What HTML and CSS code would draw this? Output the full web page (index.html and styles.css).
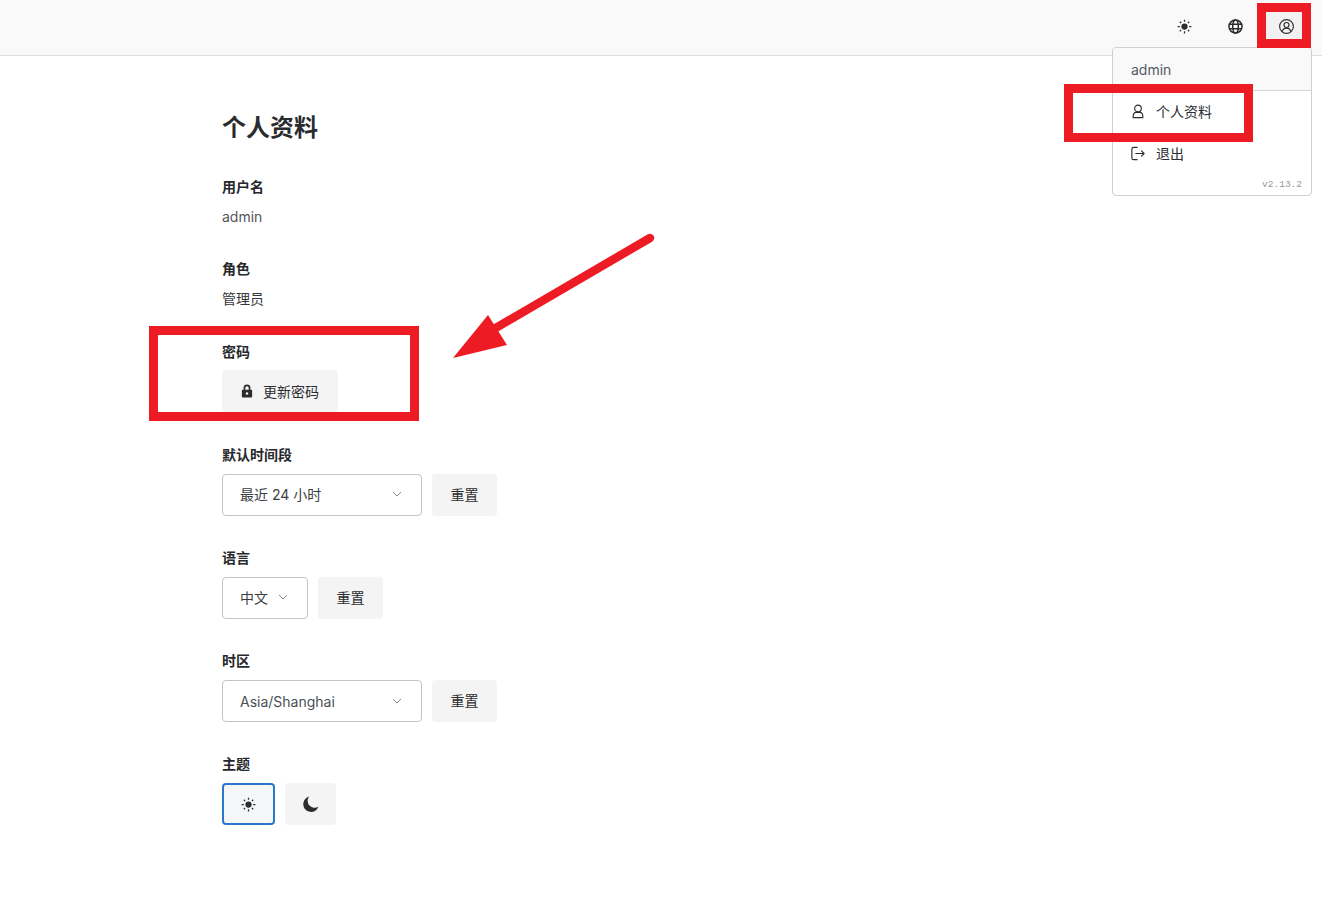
FILE: index.html
```html
<!DOCTYPE html>
<html lang="zh">
<head>
<meta charset="utf-8">
<title>个人资料</title>
<link rel="stylesheet" href="styles.css">
</head>
<body>
<header class="topbar">
  <button class="top-btn"><svg class="ico" viewBox="0 0 24 24"><circle class="solid" cx="12" cy="12" r="5"/><path class="line" d="M12 1v3.500M12 19.500V23M1 12h3.500M19.500 12H23M4.500 4.500l2 2M17.500 17.500l2 2M4.500 19.500l2-2M17.500 6.500l2-2"/></svg></button>
  <button class="top-btn"><svg class="ico" viewBox="0 0 24 24"><circle class="line heavy" cx="12" cy="12" r="10.500"/><ellipse class="line heavy" cx="12" cy="12" rx="4.500" ry="10.500"/><path class="line heavy" d="M2 8.500h20M2 15.500h20"/></svg></button>
  <button class="top-btn active"><svg class="ico" viewBox="0 0 24 24"><circle class="thin strong" cx="12" cy="12" r="11"/><circle class="thin strong" cx="12" cy="9.500" r="4"/><path class="thin strong" d="M5 20c1-3.800 3.500-5.500 7-5.500s6 1.700 7 5.500"/></svg></button>
</header>

<div class="menu">
  <div class="menu-head">admin</div>
  <div class="menu-item"><svg class="menu-ico" viewBox="0 0 16 16"><circle class="thin" cx="8" cy="4.500" r="3.800"/><path class="thin" d="M2.500 15v-1.500c0-2.500 1.500-4.500 3.500-4.500h4c2 0 3.500 2 3.500 4.500V15z"/></svg>个人资料</div>
  <div class="menu-item"><svg class="menu-ico" viewBox="0 0 16 16"><path class="thin" d="M7 1H3a2 2 0 0 0-2 2v10a2 2 0 0 0 2 2h4"/><path class="thin" d="M5.500 8H15M12 5l3 3-3 3"/></svg>退出</div>
  <div class="menu-version">v2.13.2</div>
</div>

<main class="page">
  <h1 class="title">个人资料</h1>
  <section class="field text-field">
    <div class="label">用户名</div>
    <div class="value">admin</div>
  </section>
  <section class="field text-field second">
    <div class="label">角色</div>
    <div class="value dark">管理员</div>
  </section>
  <section class="field pass-field">
    <div class="label">密码</div>
    <button class="btn pass"><svg class="lock" viewBox="0 0 14 16"><path class="solid" d="M3 6.500V4.500a4 4 0 0 1 8 0v2h1a1 1 0 0 1 1 1v7a1 1 0 0 1-1 1H2a1 1 0 0 1-1-1v-7a1 1 0 0 1 1-1zm2 0h4v-2a2 2 0 0 0-4 0zm2 3a1.500 1.500 0 1 0 0 3 1.500 1.500 0 0 0 0-3z" fill-rule="evenodd"/></svg>更新密码</button>
  </section>
  <section class="field">
    <div class="label">默认时间段</div>
    <div class="row">
      <div class="select wide"><span>最近 24 小时</span><svg class="chev" viewBox="0 0 10 6"><path d="M1 1l4 4 4-4"/></svg></div>
      <button class="btn reset">重置</button>
    </div>
  </section>
  <section class="field">
    <div class="label">语言</div>
    <div class="row">
      <div class="select narrow"><span>中文</span><svg class="chev" viewBox="0 0 10 6"><path d="M1 1l4 4 4-4"/></svg></div>
      <button class="btn reset">重置</button>
    </div>
  </section>
  <section class="field">
    <div class="label">时区</div>
    <div class="row">
      <div class="select wide latin-select"><span class="latin">Asia/Shanghai</span><svg class="chev" viewBox="0 0 10 6"><path d="M1 1l4 4 4-4"/></svg></div>
      <button class="btn reset">重置</button>
    </div>
  </section>
  <section class="field">
    <div class="label">主题</div>
    <div class="row">
      <button class="btn theme selected"><svg class="ico" viewBox="0 0 24 24"><circle class="solid" cx="12" cy="12" r="5"/><path class="line" d="M12 1v3.500M12 19.500V23M1 12h3.500M19.500 12H23M4.500 4.500l2 2M17.500 17.500l2 2M4.500 19.500l2-2M17.500 6.500l2-2"/></svg></button>
      <button class="btn theme"><svg class="moon" viewBox="0 0 16 16"><path class="solid" d="M6.200.6a7.800 7.800 0 1 0 9.300 10 6.900 6.900 0 0 1-9.300-10z"/></svg></button>
    </div>
  </section>
</main>

<div class="mark mark-user"></div>
<div class="mark mark-profile"></div>
<div class="mark mark-pass"></div>
<svg class="arrow" viewBox="0 0 210 130"><path class="arrow-line" d="M198 6L30 104"/><path class="arrow-head" d="M1 126L36 83L55 113Z"/></svg>
</body>
</html>
```
FILE: styles.css
```css
* { box-sizing: border-box; }
html, body { margin: 0; height: 904px; overflow: hidden; }
body {
  position: relative;
  background: #fff;
  color: #2b2d30;
  font-family: Inter, "Noto Sans CJK SC", sans-serif;
  font-size: 14px;
}
button { font: inherit; color: inherit; border: 0; padding: 0; }

.solid { fill: currentColor; }
.line { fill: none; stroke: currentColor; stroke-width: 2; }
.line.heavy { stroke-width: 2.400; }
.thin { fill: none; stroke: currentColor; stroke-width: 1.300; stroke-linecap: round; stroke-linejoin: round; }
.thin.strong { stroke-width: 1.800; }

.topbar {
  height: 56px;
  background: #f9f9f9;
  border-bottom: 1px solid #dedede;
  display: flex;
  justify-content: flex-end;
  align-items: flex-start;
  gap: 9px;
  padding: 12px 15px 0 0;
}
.top-btn {
  width: 42px;
  height: 28px;
  background: transparent;
  border-radius: 3px;
  display: flex;
  align-items: center;
  justify-content: center;
}
.top-btn.active { background: #f2f2f2; }
.ico { width: 15px; height: 15px; }

.menu {
  position: absolute;
  left: 1112px;
  top: 47px;
  width: 200px;
  height: 149px;
  background: #fff;
  border: 1px solid #cfcfcf;
  border-radius: 4px;
  overflow: hidden;
}
.menu-head {
  height: 43px;
  padding: 12px 18px 0;
  background: #f9f9f9;
  border-bottom: 1px solid #d4d4d4;
  color: #55595e;
  line-height: 20px;
}
.menu-item {
  height: 42px;
  padding: 0 0 2px 18px;
  display: flex;
  align-items: center;
  gap: 11px;
}
.menu-ico { width: 14px; height: 15px; }
.menu-version {
  position: absolute;
  right: 9px;
  bottom: 5px;
  font: 9.500px "Liberation Mono", "Noto Sans CJK SC", monospace;
  color: #999;
}

.page { padding: 57px 0 0 222px; }
.title { margin: 0 0 34px; font-size: 24px; line-height: 30px; font-weight: 700; color: #292b2e; }
.field { margin-bottom: 32px; }
.text-field { margin-bottom: 32px; }
.text-field.second { margin-bottom: 33px; }
.pass-field { margin-bottom: 33px; }
.pass-field .label { margin-bottom: 7px; }
.label { height: 21px; line-height: 19px; margin-bottom: 8px; font-weight: 600; font-size: 14px; color: #26282b; }
.value { height: 21px; line-height: 21px; color: #50555b; }
.value.dark { color: #33363a; }
.row { display: flex; gap: 10px; }

.btn {
  height: 42px;
  background: #f4f4f4;
  border-radius: 4px;
  display: flex;
  align-items: center;
  justify-content: center;
}
.pass { width: 116px; gap: 10px; }
.lock { width: 12px; height: 14px; }
.reset { width: 65px; padding-bottom: 2px; }
.theme { width: 51px; }
.theme.selected { width: 53px; border: 2px solid #2a78cc; background: #f5f6f7; }
.moon { width: 16px; height: 16px; }

.select {
  height: 42px;
  background: #fff;
  border: 1px solid #c4c4c4;
  border-radius: 4px;
  padding: 0 19px 2px 17px;
  display: flex;
  align-items: center;
  justify-content: space-between;
  color: #3a3d41;
}
.select.wide { width: 200px; }
.select.narrow { width: 86px; }
.select.latin-select { padding-bottom: 0; }
.latin { color: #4a4f55; }
.chev { width: 10px; height: 6px; fill: none; stroke: #8a8a8a; stroke-width: 1; }

.mark { position: absolute; border: 9px solid #ed1c24; }
.mark-user { left: 1257px; top: 3px; width: 54px; height: 45px; }
.mark-profile { left: 1064px; top: 84px; width: 189px; height: 58px; }
.mark-pass { left: 149px; top: 326px; width: 270px; height: 95px; }
.arrow { position: absolute; left: 452px; top: 232px; width: 210px; height: 130px; }
.arrow-line { fill: none; stroke: #ed1c24; stroke-width: 8.500; stroke-linecap: round; }
.arrow-head { fill: #ed1c24; }
```
